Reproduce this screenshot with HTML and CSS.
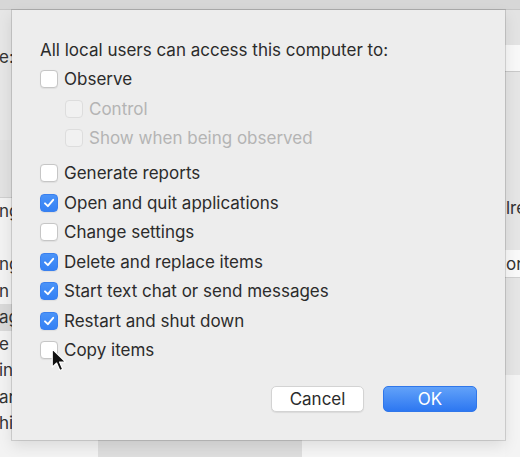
FILE: index.html
```html
<!DOCTYPE html>
<html lang="en">
<head>
<meta charset="utf-8">
<title>Access settings</title>
<link rel="stylesheet" href="styles.css">
</head>
<body>
<div class="screen">
  <div class="topbar"></div>

  <div class="left-strip">
    <div class="ls-top"><span class="frag">e:</span></div>
    <div class="ls-header"></div>
    <ul class="ls-list">
      <li>ng</li>
      <li></li>
      <li>ng</li>
      <li>n</li>
      <li class="sel">ag</li>
      <li>e</li>
      <li>in</li>
      <li>ar</li>
      <li>hi</li>
    </ul>
  </div>

  <div class="dialog">
    <div class="title">All local users can access this computer to:</div>

    <label class="option"><span class="box"></span><span class="label">Observe</span></label>
    <label class="option sub disabled"><span class="box"></span><span class="label">Control</span></label>
    <label class="option sub disabled"><span class="box"></span><span class="label">Show when being observed</span></label>

    <label class="option spaced"><span class="box"></span><span class="label">Generate reports</span></label>
    <label class="option"><span class="box checked"><svg viewBox="0 0 18 18" width="18" height="18"><path d="M5 9.3 L7.9 12.2 L13.2 5.8" /></svg></span><span class="label">Open and quit applications</span></label>
    <label class="option"><span class="box"></span><span class="label">Change settings</span></label>
    <label class="option"><span class="box checked"><svg viewBox="0 0 18 18" width="18" height="18"><path d="M5 9.3 L7.9 12.2 L13.2 5.8" /></svg></span><span class="label">Delete and replace items</span></label>
    <label class="option"><span class="box checked"><svg viewBox="0 0 18 18" width="18" height="18"><path d="M5 9.3 L7.9 12.2 L13.2 5.8" /></svg></span><span class="label">Start text chat or send messages</span></label>
    <label class="option"><span class="box checked"><svg viewBox="0 0 18 18" width="18" height="18"><path d="M5 9.3 L7.9 12.2 L13.2 5.8" /></svg></span><span class="label">Restart and shut down</span></label>
    <label class="option"><span class="box"></span><span class="label">Copy items</span></label>

    <div class="actions">
      <button class="btn btn-cancel" type="button">Cancel</button>
      <button class="btn btn-ok" type="button">OK</button>
    </div>
  </div>

  <div class="right-strip">
    <div class="rs-top"></div>
    <div class="rs-input"></div>
    <div class="rs-body">
      <div class="rs-text">lre</div>
      <div class="rs-box">or</div>
    </div>
    <div class="rs-bottom"></div>
  </div>

  <div class="bottom-strip">
    <div class="bs-a"></div>
    <div class="bs-b"></div>
    <div class="bs-c"></div>
  </div>

  <svg class="cursor" viewBox="0 0 14 24" width="15" height="25">
    <path d="M1 1 L1 18.5 L5.2 14.4 L8.3 21.6 L11 20.4 L8 13.4 L13.6 13.4 Z" />
  </svg>
</div>
</body>
</html>
```

FILE: styles.css
```css
* { box-sizing: border-box; }

body {
  margin: 0;
  font-family: Inter, "Liberation Sans", Arial, sans-serif;
  font-size: 17px;
  color: #2b2b2b;
}

.screen {
  position: relative;
  width: 520px;
  height: 457px;
  overflow: hidden;
  display: grid;
  grid-template-columns: 12px 493px 15px;
  grid-template-rows: 10px 430px 17px;
  background: #f4f4f4;
}

.topbar {
  grid-column: 1 / -1;
  grid-row: 1;
  background: #d7d7d7;
  border-bottom: 1px solid #c6c6c6;
}

/* ---------- left background strip ---------- */
.left-strip {
  grid-column: 1;
  grid-row: 2;
  display: flex;
  flex-direction: column;
  overflow: hidden;
  background: #f2f2f2;
}
.ls-top {
  height: 130px;
  background: #e6e6e6;
  padding-top: 37px;
  line-height: 20px;
  white-space: nowrap;
}
.frag { display: block; margin-left: -1px; color: #333; }
.ls-header {
  height: 58px;
  background: #e2e2e2;
  border-bottom: 1px solid #cfcfcf;
}
.ls-list {
  list-style: none;
  margin: 0;
  padding: 0;
  flex: 1;
}
.ls-list li {
  height: 26.5px;
  line-height: 26.5px;
  white-space: nowrap;
  margin-left: -1px;
  color: #333;
}
.ls-list li.sel { background: #d9d9d9; }

/* ---------- dialog ---------- */
.dialog {
  grid-column: 2;
  grid-row: 2;
  position: relative;
  z-index: 1;
  background: #ededed;
  box-shadow: 0 0 0 1px rgba(0, 0, 0, 0.13), 0 6px 14px rgba(0, 0, 0, 0.1);
  padding: 25px 28px 28px;
  display: flex;
  flex-direction: column;
}

.title {
  height: 29.5px;
  display: flex;
  align-items: center;
}

.option {
  height: 29.5px;
  display: flex;
  align-items: center;
  gap: 6px;
}
.option.sub { padding-left: 25px; }
.option.spaced { margin-top: 5.5px; }

.box {
  flex: none;
  width: 18px;
  height: 18px;
  border-radius: 4px;
  background: #ffffff;
  border: 1px solid #c6c6c6;
  box-shadow: 0 0.5px 1px rgba(0, 0, 0, 0.06);
  display: grid;
  place-items: center;
}
.box svg {
  margin: -1px;
  fill: none;
  stroke: #ffffff;
  stroke-width: 1.9;
  stroke-linecap: round;
  stroke-linejoin: round;
}
.box.checked {
  background: linear-gradient(#4a93f8, #3581f4);
  border-color: #3a80ee;
}
.option.disabled .box {
  background: #f1f1f1;
  border-color: #dddddd;
  box-shadow: none;
}
.option.disabled .label { color: #b4b4b4; }

.actions {
  margin-top: auto;
  display: flex;
  justify-content: flex-end;
  gap: 19px;
}
.btn {
  height: 26px;
  border-radius: 5px;
  font-family: inherit;
  font-size: 17px;
  padding: 0;
  display: flex;
  align-items: center;
  justify-content: center;
}
.btn-cancel {
  width: 93px;
  background: #ffffff;
  color: #2b2b2b;
  border: 1px solid #d3d3d3;
  box-shadow: 0 1px 1px rgba(0, 0, 0, 0.08);
}
.btn-ok {
  width: 94px;
  color: #ffffff;
  background: linear-gradient(#62a2f9, #2d77f1);
  border: 1px solid #3077ea;
}

/* ---------- right background strip ---------- */
.right-strip {
  grid-column: 3;
  grid-row: 2 / 4;
  display: flex;
  flex-direction: column;
  overflow: hidden;
}
.rs-top { height: 35px; background: #e3e3e3; }
.rs-input {
  height: 27px;
  background: #f8f8f8;
  border-bottom: 1px solid #c9c9c9;
}
.rs-body {
  height: 303px;
  background: #e5e5e5;
  padding-top: 125px;
  white-space: nowrap;
  color: #333;
}
.rs-text {
  height: 22px;
  line-height: 22px;
  padding-left: 1px;
}
.rs-box {
  margin-top: 31px;
  height: 28px;
  line-height: 28px;
  background: #f9f9f9;
  border-bottom: 1px solid #d0d0d0;
  padding-left: 1px;
}
.rs-bottom { flex: 1; background: #f4f4f4; }

/* ---------- bottom background strip ---------- */
.bottom-strip {
  grid-column: 1 / 3;
  grid-row: 3;
  display: flex;
}
.bs-a { width: 98px; background: #f3f3f3; }
.bs-b { width: 204px; background: #dedede; }
.bs-c { flex: 1; background: #f5f5f5; }

/* ---------- mouse pointer (over content) ---------- */
.cursor {
  position: absolute;
  left: 51px;
  top: 348px;
  z-index: 2;
}
.cursor path {
  fill: #111111;
  stroke: #ffffff;
  stroke-width: 1.1;
  stroke-linejoin: round;
}
```
